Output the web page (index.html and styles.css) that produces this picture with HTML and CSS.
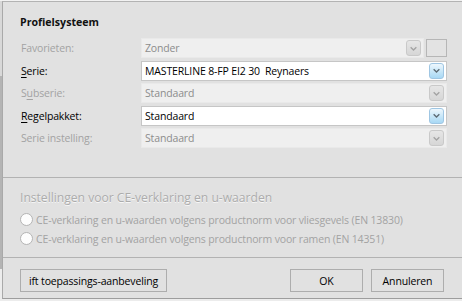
FILE: index.html
```html
<!DOCTYPE html>
<html lang="nl">
<head>
<meta charset="utf-8">
<title>Profielsysteem</title>
<link rel="stylesheet" href="styles.css">
</head>
<body>
<div class="screen">
  <div class="dialog">
    <section class="profiel">
      <h2 class="title">Profielsysteem</h2>
      <div class="form">
        <span class="label disabled">Favorieten:</span>
        <div class="combo-wrap">
          <div class="combo disabled"><span class="value">Zonder</span><span class="drop"><svg viewBox="0 0 16 16" width="16" height="16"><path d="M4.5 6.5 L8 9.8 L11.5 6.5" /></svg></span></div>
          <span class="square"></span>
        </div>

        <span class="label"><u>S</u>erie:</span>
        <div class="combo"><span class="value">MASTERLINE 8-FP EI2 30  Reynaers</span><span class="drop"><svg viewBox="0 0 16 16" width="16" height="16"><path d="M4.5 6.5 L8 9.8 L11.5 6.5" /></svg></span></div>

        <span class="label disabled">S<u>u</u>bserie:</span>
        <div class="combo disabled"><span class="value">Standaard</span><span class="drop"><svg viewBox="0 0 16 16" width="16" height="16"><path d="M4.5 6.5 L8 9.8 L11.5 6.5" /></svg></span></div>

        <span class="label"><u>R</u>egelpakket:</span>
        <div class="combo"><span class="value">Standaard</span><span class="drop"><svg viewBox="0 0 16 16" width="16" height="16"><path d="M4.5 6.5 L8 9.8 L11.5 6.5" /></svg></span></div>

        <span class="label disabled">Serie instelling:</span>
        <div class="combo disabled"><span class="value">Standaard</span><span class="drop"><svg viewBox="0 0 16 16" width="16" height="16"><path d="M4.5 6.5 L8 9.8 L11.5 6.5" /></svg></span></div>
      </div>
    </section>

    <hr class="sep">

    <section class="ce">
      <div class="ce-title">Instellingen voor CE-verklaring en u-waarden</div>
      <label class="radio"><span class="dot"></span>CE-verklaring en u-waarden volgens productnorm voor vliesgevels (EN 13830)</label>
      <label class="radio"><span class="dot"></span>CE-verklaring en u-waarden volgens productnorm voor ramen (EN 14351)</label>
    </section>

    <hr class="sep">

    <div class="buttons">
      <button class="btn wide">ift toepassings-aanbeveling</button>
      <button class="btn ok">OK</button>
      <button class="btn">Annuleren</button>
    </div>
  </div>
</div>
</body>
</html>
```

FILE: styles.css
```css
* { box-sizing: border-box; }

html, body {
  margin: 0;
  padding: 0;
  width: 462px;
  height: 301px;
  overflow: hidden;
  background: #f2f2f2;
}

.screen {
  height: 301px;
  background: linear-gradient(#d8d8d8 0, #d8d8d8 75px, #b4b4b4 75px, #b4b4b4 268px, #ececec 268px);
  padding: 0 0 0 2px;
  font-family: "Open Sans", "Noto Sans", sans-serif;
  font-size: 10.5px;
  letter-spacing: -0.15px;
  color: #000;
}

.dialog {
  width: 470px;
  height: 298px;
  background: #e1e1e1;
  border-top: 1px solid #b3b3b3;
  border-left: 1px solid #a9a9a9;
  border-bottom: 1px solid #9d9d9d;
  margin-top: 1px;
  display: flex;
  flex-direction: column;
}

.profiel {
  padding: 12px 15px 0 17px;
}

.title {
  margin: 0;
  font-size: 10.6px;
  font-weight: 700;
  line-height: 16px;
  letter-spacing: 0;
  color: #111;
}

.form {
  margin-top: 8px;
  display: grid;
  grid-template-columns: 121px 306px;
  grid-auto-rows: 20px;
  row-gap: 2.5px;
  align-items: center;
}

.label {
  padding-left: 1px;
  color: #000;
  line-height: 20px;
}

.label.disabled { color: #a3a3a3; }

.label u { text-decoration-thickness: 1px; text-underline-offset: 2px; }

.combo-wrap {
  display: flex;
  gap: 2px;
  height: 20px;
}

.combo-wrap .combo { flex: 1; }

.combo {
  height: 20px;
  display: flex;
  align-items: center;
  background: #fff;
  border: 1px solid #c6c6c6;
  padding: 0 1px 0 3px;
}

.combo.disabled {
  background: #efefef;
  border-color: #e9e9e9;
}

.combo .value {
  flex: 1;
  white-space: pre;
  color: #000;
}

.combo.disabled .value { color: #8c8c8c; }

.drop {
  width: 15px;
  height: 16px;
  border-radius: 3px;
  border: 1px solid #9fc6e3;
  background: linear-gradient(#eef7fd, #c6e6f8 55%, #a8d8f4);
  display: flex;
  align-items: center;
  justify-content: center;
  margin-right: 1px;
}

.drop svg {
  width: 15px;
  height: 15px;
  fill: none;
  stroke: #5e6b74;
  stroke-width: 1.7;
}

.combo.disabled .drop {
  border-color: #c9c9c9;
  background: linear-gradient(#e6e6e6, #d6d6d6);
}

.combo.disabled .drop svg { stroke: #a3a3a3; }

.square {
  width: 21px;
  height: 18px;
  margin-top: 1px;
  background: #e3e3e3;
  border: 1px solid #b6b6b6;
}

.sep {
  margin: 0;
  border: 0;
  height: 1px;
  flex: none;
  background: #b2b2b2;
}

.profiel + .sep { margin-top: 29px; }

.ce {
  padding: 12px 0 0 17px;
  height: 79px;
}

.ce-title {
  font-size: 12.1px;
  line-height: 16px;
  letter-spacing: 0;
  color: #acacac;
  text-shadow: 0 1px 0 #f6f6f6;
}

.radio {
  display: flex;
  align-items: center;
  gap: 3px;
  height: 19px;
  color: #a3a3a3;
}

.ce-title + .radio { margin-top: 4px; }

.dot {
  width: 13px;
  height: 13px;
  border-radius: 50%;
  background: #fdfdfd;
  border: 1px solid #b4b4b4;
  flex: none;
}

.buttons {
  display: flex;
  align-items: center;
  padding: 11px 28px 0 17px;
  gap: 8px;
}

.btn {
  height: 23px;
  width: 73px;
  font-family: "Open Sans", "Noto Sans", sans-serif;
  font-size: 10.5px;
  letter-spacing: -0.15px;
  color: #000;
  background: #e1e1e1;
  border: 1px solid #adadad;
  border-radius: 0;
  padding: 0;
}

.btn.wide { width: 147px; }

.btn.ok { margin-left: auto; }
```
